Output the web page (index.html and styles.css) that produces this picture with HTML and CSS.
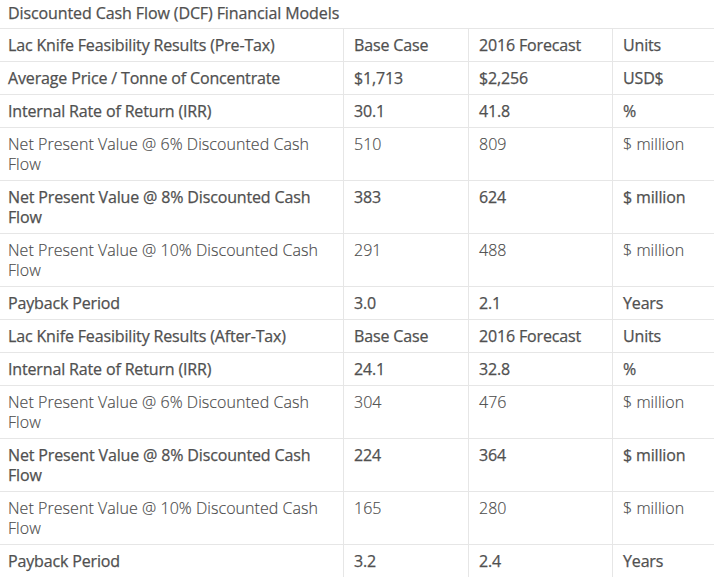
FILE: index.html
```html
<!DOCTYPE html>
<html lang="en">
<head>
<meta charset="utf-8">
<title>Discounted Cash Flow (DCF) Financial Models</title>
<link rel="stylesheet" href="styles.css">
</head>
<body>
<table class="dcf">
  <caption class="dcf-title">Discounted Cash Flow (DCF) Financial Models</caption>
  <colgroup>
    <col class="c-label">
    <col class="c-base">
    <col class="c-fore">
    <col class="c-unit">
  </colgroup>
  <tbody>
    <tr><td>Lac Knife Feasibility Results (Pre-Tax)</td><td>Base Case</td><td>2016 Forecast</td><td>Units</td></tr>
    <tr><td>Average Price / Tonne of Concentrate</td><td>$1,713</td><td>$2,256</td><td>USD$</td></tr>
    <tr><td>Internal Rate of Return (IRR)</td><td>30.1</td><td>41.8</td><td>%</td></tr>
    <tr class="light"><td>Net Present Value @ 6% Discounted Cash Flow</td><td>510</td><td>809</td><td>$ million</td></tr>
    <tr><td>Net Present Value @ 8% Discounted Cash Flow</td><td>383</td><td>624</td><td>$ million</td></tr>
    <tr class="light"><td>Net Present Value @ 10% Discounted Cash Flow</td><td>291</td><td>488</td><td>$ million</td></tr>
    <tr><td>Payback Period</td><td>3.0</td><td>2.1</td><td>Years</td></tr>
    <tr><td>Lac Knife Feasibility Results (After-Tax)</td><td>Base Case</td><td>2016 Forecast</td><td>Units</td></tr>
    <tr><td>Internal Rate of Return (IRR)</td><td>24.1</td><td>32.8</td><td>%</td></tr>
    <tr class="light"><td>Net Present Value @ 6% Discounted Cash Flow</td><td>304</td><td>476</td><td>$ million</td></tr>
    <tr><td>Net Present Value @ 8% Discounted Cash Flow</td><td>224</td><td>364</td><td>$ million</td></tr>
    <tr class="light"><td>Net Present Value @ 10% Discounted Cash Flow</td><td>165</td><td>280</td><td>$ million</td></tr>
    <tr><td>Payback Period</td><td>3.2</td><td>2.4</td><td>Years</td></tr>
  </tbody>
</table>
</body>
</html>
```
FILE: styles.css
```css
html, body {
  margin: 0;
  padding: 0;
  background: #fff;
}

body {
  font-family: "Open Sans", "Noto Sans", sans-serif;
  font-size: 16px;
  color: #505050;
}

.dcf {
  width: 714px;
  table-layout: fixed;
  border-collapse: separate;
  border-spacing: 0;
}

.dcf-title {
  caption-side: top;
  text-align: left;
  padding: 3px 8px 5px;
  line-height: 20px;
  font-weight: 400;
  letter-spacing: -0.1px;
  -webkit-text-stroke: 0.25px currentColor;
}

.c-label { width: 343px; }
.c-base { width: 125px; }
.c-fore { width: 144px; }

.dcf td {
  box-sizing: border-box;
  padding: 6px 10px;
  line-height: 20px;
  vertical-align: top;
  border-top: 1px solid #e6e6e6;
  font-weight: 400;
  letter-spacing: -0.15px;
  -webkit-text-stroke: 0.25px currentColor;
}

.dcf td:first-child {
  padding-left: 8px;
}

.dcf td + td {
  border-left: 1px solid #e6e6e6;
}

.dcf .light td {
  font-weight: 300;
  color: #4a4a4a;
  letter-spacing: 0.05px;
  -webkit-text-stroke: 0.15px currentColor;
}
```
